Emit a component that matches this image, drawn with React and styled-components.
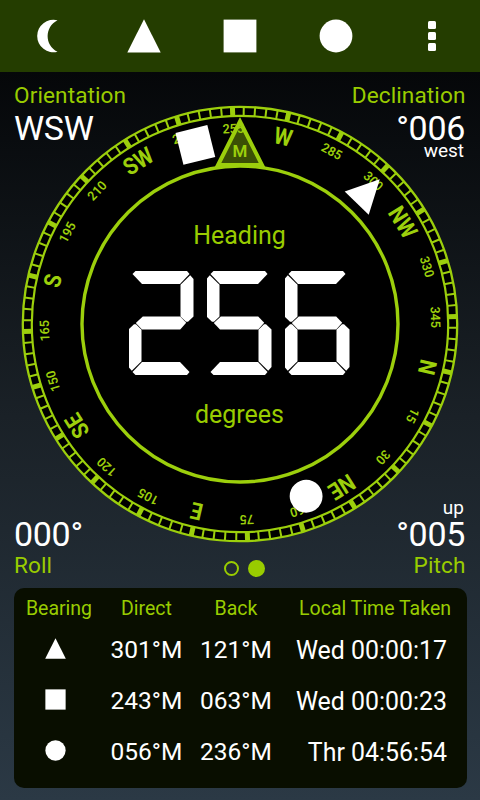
import styled, { createGlobalStyle, css } from "styled-components"

const GREEN = "#99cc00"
const DIAL = "#9ccf0c"
const HEADING = 257
const CENTER = 219


const GlobalStyle = createGlobalStyle`
  * {
    box-sizing: border-box;
  }

  body {
    margin: 0;
    background: #000;
    font-family: Roboto, "Liberation Sans", sans-serif;
  }
`

const Screen = styled.main`
  width: 480px;
  height: 800px;
  display: flex;
  flex-direction: column;
  overflow: hidden;
  background: linear-gradient(#030406 0%, #050709 9%, #1a2127 52%, #2b3945 100%);
`

const Toolbar = styled.header`
  height: 72px;
  flex: none;
  display: grid;
  grid-template-columns: repeat(5, 1fr);
  background: #243d00;
`

const ToolButton = styled.button`
  display: flex;
  align-items: center;
  justify-content: center;
  padding: 0;
  border: 0;
  background: none;
`

const Stage = styled.section`
  height: 516px;
  flex: none;
  display: grid;
  grid-template: 100% / 100%;
`

const Readouts = styled.div`
  grid-area: 1 / 1;
  display: grid;
  grid-template-columns: 1fr 1fr;
  align-content: space-between;
  padding: 10px 14px 9px;
`

const Readout = styled.div`
  display: flex;
  flex-direction: column;
  justify-content: ${({ $bottom }) => ($bottom ? "flex-end" : "flex-start")};
  align-items: ${({ $right }) => ($right ? "flex-end" : "flex-start")};
`

const Label = styled.span`
  font-size: 22.6px;
  line-height: 27px;
  letter-spacing: 0.1px;
  margin-right: 0.5px;
  color: ${GREEN};
`

const Value = styled.span`
  font-size: 34px;
  line-height: 39px;
  letter-spacing: -0.3px;
  margin-right: 1px;
  color: #fff;
  ${({ $bottom }) => $bottom && css`margin-bottom: -2px;`}
`

const Hint = styled.span`
  font-size: 19px;
  line-height: 20px;
  padding-right: 2px;
  color: #fff;
  ${({ $above }) => ($above ? css`margin-bottom: -3px;` : css`margin-top: -7px;`)}
`

const DialArea = styled.div`
  grid-area: 1 / 1;
  justify-self: center;
  align-self: start;
  width: 438px;
  height: 438px;
  margin-top: 33px;
  display: grid;
  grid-template: 100% / 100%;
`

const DialSvg = styled.svg`
  grid-area: 1 / 1;
  width: 438px;
  height: 438px;
`

const DialText = styled.text`
  font-family: Roboto, "Liberation Sans", sans-serif;
  font-size: ${({ $size }) => $size}px;
  font-weight: ${({ $weight }) => $weight};
  text-anchor: middle;
  fill: ${DIAL};
`

const HeadingBox = styled.div`
  grid-area: 1 / 1;
  display: flex;
  flex-direction: column;
  align-items: center;
  padding: 115px 1px 0 0;
`

const HeadingLabel = styled.span`
  font-size: 25px;
  line-height: 32px;
  color: ${GREEN};
`

const Digits = styled.div`
  display: flex;
  gap: 13px;
  margin: 19px 1px 24px 0;
`

const Digit = styled.div`
  display: grid;
  width: 65px;
  height: 104px;
`

const Segment = styled.i`
  grid-area: 1 / 1;
  background: #fff;
  clip-path: polygon(${({ $shape }) => $shape});
`

const Pager = styled.nav`
  grid-area: 1 / 1;
  align-self: end;
  justify-self: center;
  display: flex;
  align-items: center;
  gap: 9px;
  margin: 0 0 11px 9px;
`

const PageDot = styled.span`
  width: ${({ $active }) => ($active ? 17 : 15)}px;
  height: ${({ $active }) => ($active ? 17 : 15)}px;
  border: 2px solid ${GREEN};
  border-radius: 50%;
  background: ${({ $active }) => ($active ? GREEN : "transparent")};
`

const Panel = styled.section`
  height: 200px;
  margin: 0 13px 0 14px;
  flex: none;
  border-radius: 10px;
  background: #090e00;
`

const Row = styled.div`
  height: ${({ $head }) => ($head ? 36 : 51)}px;
  display: grid;
  grid-template-columns: 90px 85px 94px 1fr;
  align-items: center;
  justify-items: center;
  padding-top: ${({ $head }) => ($head ? 4 : 0)}px;
`

const HeadCell = styled.span`
  font-size: 19.5px;
  white-space: nowrap;
  color: ${GREEN};
  ${({ $time }) => $time && css`
    justify-self: end;
    padding-right: 16px;
  `}
`

const Cell = styled.span`
  font-size: 24.5px;
  white-space: nowrap;
  color: #fff;
  ${({ $time }) => $time && css`
    justify-self: end;
    padding: 2px 20px 0 0;
    font-size: 24.9px;
  `}
`

const ShapeCell = styled.span`
  display: flex;
  margin: -2px 7px 0 0;
`


const TOOLS = ["moon", "triangle", "square", "circle", "menu"]

const MARKS = [
  { bearing: 301, shape: "triangle", direct: "301°M", back: "121°M", time: "Wed 00:00:17" },
  { bearing: 243, shape: "square", direct: "243°M", back: "063°M", time: "Wed 00:00:23" },
  { bearing: 56, shape: "circle", direct: "056°M", back: "236°M", time: "Thr 04:56:54" },
]

const POINTS = { 0: "N", 45: "NE", 90: "E", 135: "SE", 180: "S", 225: "SW", 270: "W", 315: "NW" }

// seven segments of one digit, in a 65 x 104 box
const SEGMENTS = {
  a: "7px 0, 58.5px 0, 61px 3px, 51.5px 13px, 13.5px 13px, 4px 3px",
  b: "61.7px 4.2px, 65px 8px, 65px 45.5px, 59.5px 50.8px, 57.5px 50.8px, 52px 45.5px, 52px 13.8px",
  c: "57.5px 53.3px, 59.5px 53.3px, 65px 58.5px, 65px 96px, 61.7px 99.8px, 52px 90.2px, 52px 58.8px",
  d: "13.5px 91px, 51.5px 91px, 61px 101px, 58.5px 104px, 7px 104px, 4px 101px",
  e: "5.5px 53.3px, 7.5px 53.3px, 13px 58.8px, 13px 90.2px, 3.3px 99.8px, 0 96px, 0 58.5px",
  f: "3.3px 4.2px, 13px 13.8px, 13px 45.5px, 7.5px 50.8px, 5.5px 50.8px, 0 45.5px, 0 8px",
  g: "14.3px 45.4px, 51.7px 45.4px, 57.7px 51.8px, 51.7px 58.4px, 13.5px 58.4px, 7.3px 52px",
}

const LIT = {
  0: "abcdef", 1: "bc", 2: "abged", 3: "abgcd", 4: "fgbc",
  5: "afgcd", 6: "afgedc", 7: "abc", 8: "abcdefg", 9: "abcdfg",
}


const Shape = ({ name }) => {
  if (name === "triangle") return <path d="M0-16.7 16.7 16.5H-16.7Z" />
  if (name === "square") return <rect x="-16.4" y="-16.4" width="32.8" height="32.8" />
  if (name === "circle") return <circle r="16.4" />
  if (name === "moon") return <path d="M9.5-15.8A16.3 16.3 0 1 0 9.5 15.8C-3.6 9-3.6-9 9.5-15.8Z" />
  return [-11, 0, 11].map((y) => <rect key={y} x="-4" y={y - 4} width="8" height="8" rx="1.5" />)
}

const ShapeIcon = ({ name, size }) => (
  <svg width={size} height={size} viewBox="-17 -17 34 34" fill="#fff" overflow="visible">
    <Shape name={name} />
  </svg>
)

const SegmentNumber = ({ value }) => (
  <Digits role="img" aria-label={value}>
    {value.split("").map((digit, i) => (
      <Digit key={i}>
        {LIT[digit].split("").map((id) => <Segment key={id} $shape={SEGMENTS[id]} />)}
      </Digit>
    ))}
  </Digits>
)

const Dial = () => {
  const ticks = Array.from({ length: 120 }, (_, i) => i * 3)
  const labels = Array.from({ length: 24 }, (_, i) => i * 15)

  return (
    <DialSvg viewBox="0 0 438 438">
      <g transform={`translate(${CENTER} ${CENTER})`}>
        <circle r="217.2" fill="#000" stroke={DIAL} strokeWidth="2.3" />
        <circle r="208.2" fill="none" stroke={DIAL} strokeWidth="2.2" />
        <g transform={`rotate(${-HEADING})`} stroke={DIAL}>
          {ticks.map((deg) => (
            <path
              key={deg}
              d="M0-217V-208"
              strokeWidth={deg % 15 ? 2 : 5}
              transform={`rotate(${deg})`}
            />
          ))}
        </g>
        <g transform={`rotate(${-HEADING})`}>
          {labels.map((deg) => (
            <DialText
              key={deg}
              $size={POINTS[deg] ? 23.5 : 13}
              $weight={POINTS[deg] ? 700 : 600}
              y={POINTS[deg] ? -184 : -191}
              transform={`rotate(${deg}) scale(${POINTS[deg] ? 0.88 : 0.96} 1)`}
            >
              {POINTS[deg] || deg}
            </DialText>
          ))}
          <g fill="#fff">
            {MARKS.map(({ bearing, shape }) => (
              <g key={bearing} transform={`rotate(${bearing}) translate(0 -184.5)`}>
                <Shape name={shape} />
              </g>
            ))}
          </g>
        </g>
        <circle r="158" fill="none" stroke={DIAL} strokeWidth="3.4" />
        <path d="M0-202.5 22-159H-22Z" fill={DIAL} fillOpacity="0.38" stroke={DIAL} strokeWidth="4" />
        <DialText $size={17} $weight={600} y="-167">M</DialText>
      </g>
    </DialSvg>
  )
}

export default function App() {
  return (
    <>
      <GlobalStyle />
      <Screen>
        <Toolbar>
          {TOOLS.map((name) => (
            <ToolButton key={name} aria-label={name}>
              <ShapeIcon name={name} size={34} />
            </ToolButton>
          ))}
        </Toolbar>
        <Stage>
          <Readouts>
            <Readout>
              <Label>Orientation</Label>
              <Value>WSW</Value>
            </Readout>
            <Readout $right>
              <Label>Declination</Label>
              <Value>°006</Value>
              <Hint>west</Hint>
            </Readout>
            <Readout $bottom>
              <Value $bottom>000°</Value>
              <Label>Roll</Label>
            </Readout>
            <Readout $bottom $right>
              <Hint $above>up</Hint>
              <Value $bottom>°005</Value>
              <Label>Pitch</Label>
            </Readout>
          </Readouts>
          <DialArea>
            <Dial />
            <HeadingBox>
              <HeadingLabel>Heading</HeadingLabel>
              <SegmentNumber value="256" />
              <HeadingLabel>degrees</HeadingLabel>
            </HeadingBox>
          </DialArea>
          <Pager>
            <PageDot />
            <PageDot $active />
          </Pager>
        </Stage>
        <Panel>
          <Row $head>
            <HeadCell>Bearing</HeadCell>
            <HeadCell>Direct</HeadCell>
            <HeadCell>Back</HeadCell>
            <HeadCell $time>Local Time Taken</HeadCell>
          </Row>
          {MARKS.map(({ bearing, shape, direct, back, time }) => (
            <Row key={bearing}>
              <ShapeCell>
                <ShapeIcon name={shape} size={21} />
              </ShapeCell>
              <Cell>{direct}</Cell>
              <Cell>{back}</Cell>
              <Cell $time>{time}</Cell>
            </Row>
          ))}
        </Panel>
      </Screen>
    </>
  )
}
